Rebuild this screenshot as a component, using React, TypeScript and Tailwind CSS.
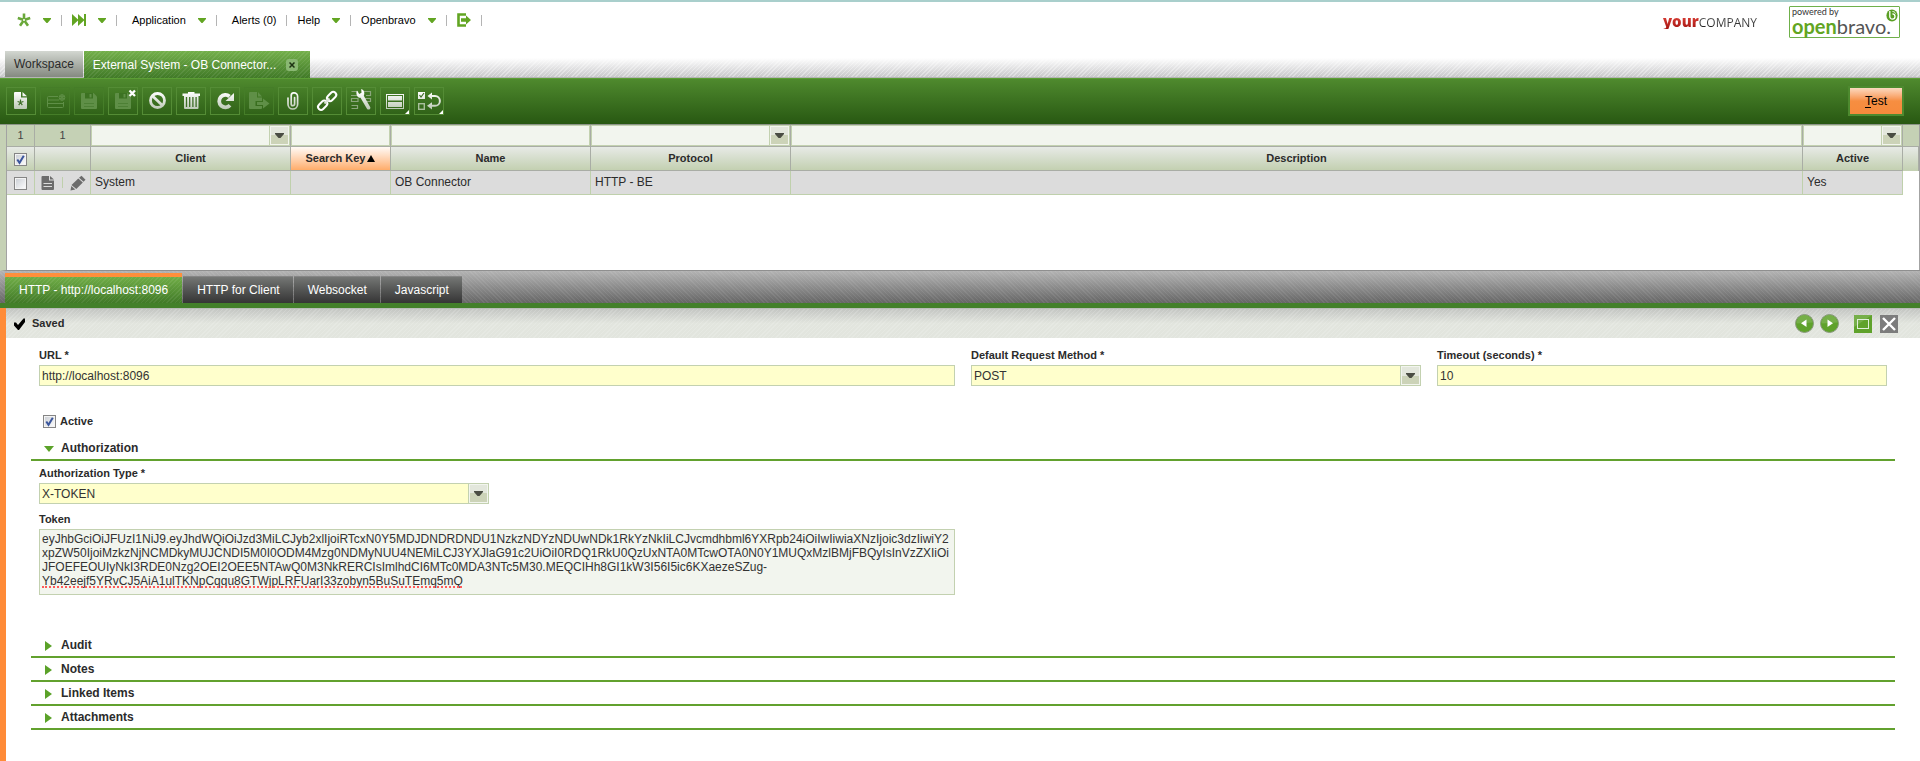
import React, { useState } from 'react';

const TOKEN =
  'eyJhbGciOiJFUzI1NiJ9.eyJhdWQiOiJzd3MiLCJyb2xlIjoiRTcxN0Y5MDJDNDRDNDU1NzkzNDYzNDUwNDk1RkYzNkIiLCJvcmdhbml6YXRpb24iOiIwIiwiaXNzIjoic3dzIiwiY2' +
  'xpZW50IjoiMzkzNjNCMDkyMUJCNDI5M0I0ODM4Mzg0NDMyNUU4NEMiLCJ3YXJlaG91c2UiOiI0RDQ1RkU0QzUxNTA0MTcwOTA0N0Y1MUQxMzlBMjFBQyIsInVzZXIiOi' +
  'JFOEFEOUIyNkI3RDE0Nzg2OEI2OEE5NTAwQ0M3NkRERCIsImlhdCI6MTc0MDA3NTc5M30.MEQCIHh8GI1kW3I56I5ic6KXaezeSZug-' +
  'Yb42eejf5YRvCJ5AiA1ulTKNpCqqu8GTWjpLRFUarI33zobyn5BuSuTEmq5mQ';

/* ---------- Top menu ---------- */

function Caret() {
  return (
    <svg width="8" height="5" viewBox="0 0 8 5" aria-hidden="true">
      <path d="M0 0h8v1L4.500 5h-1L0 1z" fill="#62a522" />
    </svg>
  );
}

function StarIcon() {
  return (
    <svg width="14" height="14" viewBox="0 0 14 14" aria-hidden="true">
      <g stroke="#6aa83a" strokeWidth="2.600">
        <path d="M7 7V.5M7 7L.8 5M7 7l6.200-2M7 7l-4 5.800M7 7l4 5.800" />
      </g>
      <circle cx="7" cy="7" r="1" fill="#fff" />
    </svg>
  );
}

function ForwardIcon() {
  return (
    <svg width="14" height="14" viewBox="0 0 14 14" aria-hidden="true">
      <path d="M0 1l6 5.500V1l6 5.500V1h2v12h-2V7.500L6 13V7.500L0 13z" fill="#62a522" />
    </svg>
  );
}

function ExitIcon() {
  return (
    <svg width="14" height="14" viewBox="0 0 14 14" aria-hidden="true">
      <path d="M9 1.500H1.500v11H9" fill="none" stroke="#62a522" strokeWidth="2.600" />
      <path d="M4 5.300h5V2.500L14 7l-5 4.500V8.700H4z" fill="#62a522" />
    </svg>
  );
}

function MenuItem({
  label,
  caret,
  wide,
  children,
}: {
  label: string;
  caret?: boolean;
  wide?: boolean;
  children?: React.ReactNode;
}) {
  return (
    <li className="flex items-center">
      <button
        type="button"
        aria-label={label}
        className={
          wide ? 'flex items-center gap-3 pr-2.5 pl-[15px]' : 'flex items-center gap-3 px-2.5'
        }
      >
        {children ?? <span>{label}</span>}
        {caret && <Caret />}
      </button>
      <span className="h-[11px] w-px bg-[#b4b4b4]" />
    </li>
  );
}

function Logos() {
  return (
    <div className="flex items-center gap-8 pr-5">
      <div className="flex items-baseline leading-4">
        <span className="bg-linear-to-b from-[#e8483f] to-[#a5120f] bg-clip-text font-['Open_Sans'] text-[15px] font-extrabold text-transparent">
          your
        </span>
        <span className="bg-linear-to-b from-[#666] to-[#111] bg-clip-text font-['Open_Sans'] text-xs text-transparent">
          COMPANY
        </span>
      </div>
      <div className="relative flex h-8 w-[111px] flex-col rounded-[1px] border border-[#6fb04a] pl-[2px] font-['Lato']">
        <span className="text-[9px] leading-[9px] text-[#333]">powered by</span>
        <span className="text-[20px] leading-5 text-[#555]">
          <span className="font-bold text-[#62a522]">open</span>bravo.
        </span>
        <svg
          className="absolute top-[2px] right-[1px]"
          width="12"
          height="13"
          viewBox="0 0 12 13"
          aria-hidden="true"
        >
          <ellipse cx="6" cy="6.500" rx="5.600" ry="6" fill="#5a9f24" />
          <path d="M3.800 2v5.500a2.600 2.600 0 1 0 2.600-2.600" stroke="#fff" strokeWidth="1.300" fill="none" />
          <path d="M6.500 2.500c1.500 0 2.500.8 3 2" stroke="#fff" fill="none" />
        </svg>
      </div>
    </div>
  );
}

function Header() {
  return (
    <header className="relative flex flex-col border-t-2 border-[#a9cfcc] bg-white">
      <div className="absolute inset-x-0 bottom-0 h-5 border-b border-[#b5b5b5] bg-[repeating-linear-gradient(135deg,rgba(255,255,255,0.35)_0px,rgba(255,255,255,0.35)_1px,transparent_1px,transparent_3px),linear-gradient(to_bottom,#ffffff,#c8c8ca)]" />
      <div className="flex items-start justify-between">
        <ul className="flex h-9 items-center pl-[7px] text-[11px] text-black">
          <MenuItem label="Create New" caret>
            <StarIcon />
          </MenuItem>
          <MenuItem label="Quick Launch" caret>
            <ForwardIcon />
          </MenuItem>
          <MenuItem label="Application" caret wide />
          <MenuItem label="Alerts (0)" wide />
          <MenuItem label="Help" caret />
          <MenuItem label="Openbravo" caret />
          <MenuItem label="Log Out">
            <ExitIcon />
          </MenuItem>
        </ul>
        <div className="pt-1">
          <Logos />
        </div>
      </div>
      <div className="relative flex gap-px pt-[13px] pl-[5px] text-xs">
        <button
          type="button"
          className="mb-px h-[26px] bg-linear-to-b from-[#d3d7d1] to-[#858a81] px-[9px] text-[#2b2b2b]"
        >
          Workspace
        </button>
        <div className="flex h-[27px] items-center gap-2.5 bg-[repeating-linear-gradient(135deg,rgba(255,255,255,0.08)_0px,rgba(255,255,255,0.08)_1px,transparent_1px,transparent_3px),linear-gradient(to_bottom,#74b04b,#417a28)] pr-3 pl-[9px] text-white">
          <button type="button">External System - OB Connector...</button>
          <button
            type="button"
            aria-label="Close tab"
            className="flex size-3 items-center justify-center rounded-[3px] bg-[#8ab873]"
          >
            <svg width="6" height="6" viewBox="0 0 6 6" aria-hidden="true">
              <path d="M.5.5l5 5M5.500.5l-5 5" stroke="#1e3313" strokeWidth="1.500" />
            </svg>
          </button>
        </div>
      </div>
    </header>
  );
}

/* ---------- Toolbar ---------- */

const W = 'url(#toolbarWhite)';
const DIM = '#5f8f47';

function Floppy() {
  return (
    <g fill={DIM}>
      <path d="M7 5h11.500L22 8.500V20a1 1 0 0 1-1 1H7a1 1 0 0 1-1-1V6a1 1 0 0 1 1-1z" />
      <path d="M10 5h8v5.500h-8z" fill="#3c7222" />
      <path d="M14.500 6h2v3.500h-2z" />
      <path d="M9 15h10v1H9zM9 18h10v1H9z" fill="#4d8035" />
    </g>
  );
}

const TOOLS: { label: string; dim?: boolean; more?: boolean; icon: React.ReactNode }[] = [
  {
    label: 'New record in form',
    icon: (
      <>
        <path d="M8 4h6v5.500h6V20a1 1 0 0 1-1 1H8a1 1 0 0 1-1-1V5a1 1 0 0 1 1-1z" fill={W} />
        <path d="M15.500 4L20 8.300h-4.500z" fill={W} />
        <path
          d="M13.500 14.500V11.500M13.500 14.500l-2.900-1M13.500 14.500l2.900-1M13.500 14.500l-1.800 2.600M13.500 14.500l1.800 2.600"
          stroke="#3d6d26"
          strokeWidth="1.200"
        />
      </>
    ),
  },
  {
    label: 'New record in grid',
    dim: true,
    icon: (
      <g stroke={DIM} fill="none">
        <path d="M17 8.500H7.500a1 1 0 0 0-1 1v9a1 1 0 0 0 1 1h14a1 1 0 0 0 1-1V14M6.500 12H18M6.500 15.500h16" />
        <path d="M21 6.500v6M18.200 8l5.600 3M23.800 8l-5.600 3" strokeWidth="1.200" />
        <circle cx="21" cy="9.500" r="2.800" />
      </g>
    ),
  },
  { label: 'Save', dim: true, icon: <Floppy /> },
  {
    label: 'Save and close',
    icon: (
      <>
        <Floppy />
        <path d="M20.500 2.500l5.500 5.500M26 2.500L20.500 8" stroke="#fff" strokeWidth="2.300" />
      </>
    ),
  },
  {
    label: 'Undo',
    icon: (
      <g stroke={W} strokeWidth="2.800" fill="none">
        <circle cx="14.500" cy="12.500" r="7" />
        <path d="M9.500 8l10 9.500" />
      </g>
    ),
  },
  {
    label: 'Delete',
    icon: (
      <>
        <path d="M5.500 5.500H11V4h6.500v1.500H23V8H5.500z" fill={W} />
        <path d="M7 8h14.500v12a1 1 0 0 1-1 1H8a1 1 0 0 1-1-1z" fill={W} />
        <path d="M9.500 9v10M12.700 9v10M15.900 9v10M19.100 9v10" stroke="#3d6d26" strokeWidth="1.300" />
      </>
    ),
  },
  {
    label: 'Refresh',
    icon: (
      <>
        <path d="M19 17.300A6.200 6.200 0 1 1 18.500 8.500" stroke={W} strokeWidth="3.800" fill="none" />
        <path d="M23 5v8h-8.500z" fill={W} />
      </>
    ),
  },
  {
    label: 'Export',
    dim: true,
    icon: (
      <g fill={DIM}>
        <path d="M5 4h7v5.500h5V13h-6.500v5H17v2a1 1 0 0 1-1 1H5a1 1 0 0 1-1-1V5a1 1 0 0 1 1-1z" />
        <path d="M13 4l4 4.500h-4zM12 14h6v-3.500l6.500 5-6.500 5V17h-6z" />
      </g>
    ),
  },
  {
    label: 'Attachments',
    icon: (
      <path
        d="M12.200 9v7a1.700 1.700 0 0 0 3.400 0V9.500M9 10v6.200a4.800 4.800 0 0 0 9.600 0V8.500a3.600 3.600 0 0 0-3.600-3.600h-.4a2.600 2.600 0 0 0-2.400 2.600V10"
        stroke={W}
        strokeWidth="1.700"
        strokeLinecap="round"
        fill="none"
      />
    ),
  },
  {
    label: 'Linked items',
    icon: (
      <g fill="none" stroke={W} strokeWidth="2">
        <rect x="-5.500" y="-3" width="10.500" height="6" rx="3" transform="translate(18.800 8.300) rotate(-45)" />
        <rect x="-5" y="-3" width="10.500" height="6" rx="3" transform="translate(9.500 17.400) rotate(-45)" />
        <path d="M11.500 15.500l5-5" />
      </g>
    ),
  },
  {
    label: 'Process',
    icon: (
      <>
        <path
          d="M4.500 3.500h6v4h-6M17 3.500h6.500v4H19M4.500 10.500H11v3H4.500zM18 10.500h5.500v3H19M4.500 17.500h6v3h-6M4 7.500h7"
          stroke="#8ba67c"
          strokeWidth="1.200"
          fill="none"
        />
        <path
          d="M10 2.500l2.200 3.500 2.300-1.200L14.200 1c3 1 3.800 4 2.600 6.700l6.500 11.500c.6 2-2 3.300-3.200 1.700L13.500 9.800C10.500 10 8.300 6 10 2.500z"
          fill={W}
        />
      </>
    ),
  },
  {
    label: 'Toggle view',
    more: true,
    icon: (
      <>
        <rect x="5.500" y="6.500" width="17" height="14" fill="none" stroke={W} />
        <path d="M7 8h14v4.500H7zM7 14h14v5H7z" fill={W} />
      </>
    ),
  },
  {
    label: 'Tree',
    more: true,
    icon: (
      <>
        <path d="M3 4h7v7H3z" fill={W} />
        <path d="M4.500 7l1.500 2 3-4" stroke="#3d6d26" strokeWidth="1.200" fill="none" />
        <rect x="3.700" y="15.700" width="5.600" height="5.600" fill="none" stroke="#a9bf9c" strokeWidth="1.400" />
        <path d="M15 8h5a4.800 4.800 0 0 1 0 9.800h-5" stroke={W} strokeWidth="2" fill="none" />
        <path d="M12.500 8L17 4.500v7zM12 17.800l5-3.600v7.200z" fill={W} />
      </>
    ),
  },
];

function Toolbar() {
  return (
    <div className="flex items-center justify-between border-t border-[#5c9e35] border-b border-b-[#8c9488] bg-linear-to-b from-[#4f8a2e] to-[#285812] pt-[7px] pr-4 pb-2 pl-1.5">
      <svg width="0" height="0" className="absolute" aria-hidden="true">
        <linearGradient id="toolbarWhite" gradientUnits="userSpaceOnUse" x1="0" y1="4" x2="0" y2="22">
          <stop offset="0" stopColor="#fff" />
          <stop offset="1" stopColor="#b9c6b2" />
        </linearGradient>
      </svg>
      <div className="flex gap-1">
        {TOOLS.map((t) => (
          <button
            key={t.label}
            type="button"
            aria-label={t.label}
            disabled={t.dim}
            className={
              t.dim
                ? 'h-7 w-[30px] border border-[#457d28]'
                : 'h-7 w-[30px] border border-[#548c35]'
            }
          >
            <svg width="28" height="26" viewBox="0 0 28 26" fill="none" aria-hidden="true">
              {t.icon}
              {t.more && <path d="M28 22v4h-4z" fill="#fff" />}
            </svg>
          </button>
        ))}
      </div>
      <button
        type="button"
        className="h-[30px] w-14 border-2 border-[#4d8a2f] bg-linear-to-b from-[#fbd9bf] via-[#f68e41] via-50% to-[#f68a3c] text-xs text-black"
      >
        <span className="underline underline-offset-2">T</span>est
      </button>
    </div>
  );
}

/* ---------- Shared controls ---------- */

function PickerArrow() {
  return (
    <span className="pointer-events-none absolute inset-y-0 right-0 flex w-[21px] items-center justify-center border border-[#c3d1b0] bg-[#f2f5ee] p-px">
      <span className="flex size-full items-center justify-center bg-linear-to-b from-[#e3e7dc] from-50% to-[#ccd3b8] to-50%">
        <svg width="9" height="5" viewBox="0 0 9 5" aria-hidden="true">
          <path d="M0 0h9v1L5.500 5h-2L0 1z" fill="#4a4d43" />
        </svg>
      </span>
    </span>
  );
}

function CheckBox({ id, label, initial }: { id: string; label: string; initial: boolean }) {
  const [on, setOn] = useState(initial);
  return (
    <span className="relative inline-flex size-[13px] align-middle">
      <input
        id={id}
        type="checkbox"
        aria-label={label}
        checked={on}
        onChange={(e) => setOn(e.target.checked)}
        className="size-[13px] appearance-none border border-[#858585] bg-linear-to-br from-[#c9cdd3] to-white shadow-[inset_0_0_0_1px_#f4f4f4]"
      />
      {on && (
        <svg
          className="pointer-events-none absolute inset-0"
          width="13"
          height="13"
          viewBox="0 0 13 13"
          aria-hidden="true"
        >
          <path d="M3.300 6.500L5.500 9.800 9.800 2.800" stroke="#3b569c" strokeWidth="2" fill="none" />
        </svg>
      )}
    </span>
  );
}

/* ---------- Grid ---------- */

function FilterCell({ label, picker }: { label: string; picker?: boolean }) {
  const box = 'block h-[21px] w-full border border-[#c3d1b0] bg-[#f2f5ee] px-1 text-xs';
  return (
    <td className="border-r border-b border-[#a9ada5] bg-[#f2f5ee] p-0">
      {picker ? (
        <span className="relative block">
          <select aria-label={label} className={`${box} appearance-none`} defaultValue="">
            <option value=""></option>
          </select>
          <PickerArrow />
        </span>
      ) : (
        <input aria-label={label} className={box} />
      )}
    </td>
  );
}

function RecordGrid() {
  const head =
    'border-r border-b border-[#a9ada5] bg-linear-to-b from-[#e7eae6] to-[#c3d0b1] p-0 text-center font-bold';
  const cell = 'truncate border-r border-b border-[#bfd0ac] bg-[#dcdcdc] px-1 pt-0 pb-px';
  const count = 'border-r border-b border-[#a9ada5] bg-[#c5d1b5] p-0 text-center text-[11px] text-[#444]';
  return (
    <section className="min-h-[146px] border-b border-l-6 border-[#8f8f8f] border-l-[#c5d1b5] bg-white">
      <div className="min-h-[145px] border-x border-[#a3a3a3]">
        <table className="w-full table-fixed border-separate border-spacing-0 text-xs text-[#2b2b2b]">
          <colgroup>
            <col className="w-7" />
            <col className="w-14" />
            <col className="w-[200px]" />
            <col className="w-[100px]" />
            <col className="w-[200px]" />
            <col className="w-[200px]" />
            <col />
            <col className="w-[100px]" />
            <col className="w-4" />
          </colgroup>
          <thead>
            <tr className="h-[22px]">
              <td className={count}>1</td>
              <td className={count}>1</td>
              <FilterCell label="Filter Client" picker />
              <FilterCell label="Filter Search Key" />
              <FilterCell label="Filter Name" />
              <FilterCell label="Filter Protocol" picker />
              <FilterCell label="Filter Description" />
              <FilterCell label="Filter Active" picker />
              <td className="border-b border-[#a9ada5] bg-[#c5d1b5] p-0" />
            </tr>
            <tr className="h-6 text-[11px]">
              <th className={head}>
                <CheckBox id="select-all" label="Select all" initial />
              </th>
              <th className={head} />
              <th className={head}>Client</th>
              <th className="border-r border-b border-[#a9ada5] bg-linear-to-b from-[#fffaf6] to-[#ffac69] p-0 text-center font-bold">
                <span className="flex items-center justify-center gap-0.5">
                  Search Key
                  <svg width="8" height="7" viewBox="0 0 8 7" aria-hidden="true">
                    <path d="M4 0l4 7H0z" fill="#000" />
                  </svg>
                </span>
              </th>
              <th className={head}>Name</th>
              <th className={head}>Protocol</th>
              <th className={head}>Description</th>
              <th className={head}>Active</th>
              <th className="border-r border-[#a9ada5] bg-linear-to-b from-[#e7eae6] to-[#c3d0b1] p-0" />
            </tr>
          </thead>
          <tbody>
            <tr className="h-6">
              <td className="border-r border-b border-[#bfd0ac] bg-[#dcdcdc] p-0 text-center">
                <CheckBox id="select-row" label="Select row" initial={false} />
              </td>
              <td className="border-r border-b border-[#bfd0ac] bg-[#dcdcdc] p-0">
                <span className="flex items-center justify-between pr-1 pl-1.5">
                  <button type="button" aria-label="Edit in form">
                    <svg width="14" height="16" viewBox="0 0 14 16" aria-hidden="true">
                      <path d="M1.500 1H8v4.500h5V14a1 1 0 0 1-1 1H1.500a1 1 0 0 1-1-1V2a1 1 0 0 1 1-1zM9 1l4 3.500H9z" fill="#6c6c6c" />
                      <path d="M2.500 8.500h8.500M2.500 11.500h8.500" stroke="#dcdcdc" strokeWidth="1.200" />
                    </svg>
                  </button>
                  <span className="h-[11px] w-px bg-[#bfd0ac]" />
                  <button type="button" aria-label="Edit in grid">
                    <svg width="16" height="16" viewBox="0 0 16 16" aria-hidden="true">
                      <path d="M11.500.7l4 4-2 2-4.500-4z" fill="#6c6c6c" />
                      <path d="M8.300 3.500l4.500 4-6.500 6.500-4.800-4z" fill="#6c6c6c" />
                      <path d="M1.300 11l4 3.500-4.800 1z" fill="#6c6c6c" />
                    </svg>
                  </button>
                </span>
              </td>
              <td className={cell}>System</td>
              <td className={cell} />
              <td className={cell}>OB Connector</td>
              <td className={cell}>HTTP - BE</td>
              <td className={cell} />
              <td className={cell}>Yes</td>
              <td />
            </tr>
          </tbody>
        </table>
      </div>
    </section>
  );
}

/* ---------- Child tabs ---------- */

function ChildTabs() {
  return (
    <nav className="flex items-end border-b-[5px] border-[#43802a] bg-[repeating-linear-gradient(45deg,rgba(255,255,255,0.07)_0px,rgba(255,255,255,0.07)_1px,transparent_1px,transparent_3px),linear-gradient(to_bottom,#b3b3b3,#666666)] pl-[5px] text-xs text-white">
      <button
        type="button"
        className="mt-0.5 mr-px h-[30px] border-t-4 border-[#ff8f3b] bg-[repeating-linear-gradient(135deg,rgba(255,255,255,0.07)_0px,rgba(255,255,255,0.07)_1px,transparent_1px,transparent_3px),linear-gradient(to_bottom,#70ad47,#417a28)] px-3.5"
      >
        HTTP - http://localhost:8096
      </button>
      {['HTTP for Client', 'Websocket', 'Javascript'].map((t) => (
        <button
          key={t}
          type="button"
          className="mr-px h-[27px] border-t border-[#858585] bg-linear-to-b from-[#757775] to-[#353535] pr-[13px] pl-3.5"
        >
          {t}
        </button>
      ))}
    </nav>
  );
}

/* ---------- Form ---------- */

function StatusBar() {
  return (
    <div className="flex h-[30px] items-center justify-between border-t border-[#b9bcb9] bg-[repeating-linear-gradient(135deg,rgba(255,255,255,0.15)_0px,rgba(255,255,255,0.15)_1px,transparent_1px,transparent_3px),linear-gradient(to_bottom,#c4c6c3,#e2e5de_50%)] pr-[22px] pl-2">
      <div className="flex items-center gap-[7px] text-[11px] font-bold text-[#2b2b2b]">
        <svg width="11" height="12" viewBox="0 0 11 12" aria-hidden="true">
          <path d="M0 4.500h2l2 2.500L9.500.5H11v3.500L5 12H4L0 7.500z" fill="#000" />
        </svg>
        <span>Saved</span>
      </div>
      <div className="flex items-center">
        <button type="button" aria-label="Previous record" className="mr-1.5">
          <svg width="19" height="19" viewBox="0 0 19 19" aria-hidden="true">
            <circle cx="9.500" cy="9.500" r="9" fill="#5fa22b" stroke="#8b9a80" />
            <path d="M1.500 9.500a8 8 0 0 1 16-1z" fill="#fff" opacity=".14" />
            <path d="M11.500 5.500v7.500L6 9.200z" fill="#fff" />
          </svg>
        </button>
        <button type="button" aria-label="Next record" className="mr-[15px]">
          <svg width="19" height="19" viewBox="0 0 19 19" aria-hidden="true">
            <circle cx="9.500" cy="9.500" r="9" fill="#5fa22b" stroke="#8b9a80" />
            <path d="M1.500 9.500a8 8 0 0 1 16-1z" fill="#fff" opacity=".14" />
            <path d="M7.500 5.500v7.500L13 9.200z" fill="#fff" />
          </svg>
        </button>
        <button type="button" aria-label="Maximize" className="mr-2">
          <svg width="18" height="18" viewBox="0 0 18 18" aria-hidden="true">
            <path d="M0 0h18v18H0z" fill="#5fa22b" />
            <path d="M0 0h18L0 12z" fill="#fff" opacity=".15" />
            <rect x="3.500" y="4.500" width="11" height="9" fill="none" stroke="#dfeeda" />
          </svg>
        </button>
        <button type="button" aria-label="Close form">
          <svg width="18" height="18" viewBox="0 0 18 18" aria-hidden="true">
            <path d="M0 0h18v18H0z" fill="#7c7c7c" />
            <path d="M3 3l12 12M15 3L3 15" stroke="#fff" strokeWidth="2.400" />
          </svg>
        </button>
      </div>
    </div>
  );
}

const FIELD = 'block h-[21px] w-full border border-[#c3d1b0] bg-[#ffffcc] px-0.5 text-xs text-[#333]';
const LABEL = 'mb-0.5 block text-[11px] leading-4 font-bold text-[#2b2b2b]';

function TextField({ id, label, value }: { id: string; label: string; value: string }) {
  return (
    <>
      <label htmlFor={id} className={LABEL}>
        {label}
      </label>
      <input id={id} defaultValue={value} className={FIELD} />
    </>
  );
}

function SelectField({ id, label, value }: { id: string; label: string; value: string }) {
  return (
    <>
      <label htmlFor={id} className={LABEL}>
        {label}
      </label>
      <span className="relative block">
        <select id={id} className={`${FIELD} appearance-none`} defaultValue={value}>
          <option>{value}</option>
        </select>
        <PickerArrow />
      </span>
    </>
  );
}

function SectionHeader({ title, open }: { title: string; open?: boolean }) {
  return (
    <h2 className="mx-[25px] border-b-2 border-[#62a12e]">
      <button
        type="button"
        aria-expanded={!!open}
        className="flex h-[22px] items-center gap-1.5 pl-3 text-xs font-bold text-[#2b2b2b]"
      >
        <svg width="12" height="12" viewBox="0 0 12 12" aria-hidden="true">
          {open ? <path d="M1 4h10L6 10z" fill="#5ba229" /> : <path d="M2 2v10l7-5z" fill="#5ba229" />}
        </svg>
        {title}
      </button>
    </h2>
  );
}

function RecordForm() {
  return (
    <section className="grow border-l-6 border-[#ff8b38] bg-white">
      <StatusBar />
      <div className="grid grid-cols-4 gap-x-4 px-[33px] pt-[9px]">
        <div className="col-span-2">
          <TextField id="url" label="URL *" value="http://localhost:8096" />
        </div>
        <div>
          <SelectField id="method" label="Default Request Method *" value="POST" />
        </div>
        <div>
          <TextField id="timeout" label="Timeout (seconds) *" value="10" />
        </div>
      </div>
      <div className="flex items-center gap-1 px-[37px] pt-[27px] pb-2">
        <CheckBox id="active" label="Active" initial />
        <label htmlFor="active" className="text-[11px] leading-4 font-bold text-[#2b2b2b]">
          Active
        </label>
      </div>
      <SectionHeader title="Authorization" open />
      <div className="grid grid-cols-4 gap-x-4 gap-y-[7px] px-[33px] pt-1 pb-[39px]">
        <div>
          <SelectField id="auth-type" label="Authorization Type *" value="X-TOKEN" />
        </div>
        <div className="col-span-2 col-start-1">
          <label htmlFor="token" className={LABEL}>
            Token
          </label>
          <div className="relative">
            <textarea
              id="token"
              spellCheck={false}
              defaultValue={TOKEN}
              className="block h-[66px] w-full resize-none overflow-hidden border border-[#c3d1b0] bg-[#f2f5ee] px-0.5 py-0.5 text-xs leading-3.5 [overflow-wrap:anywhere] text-[#333]"
            />
            <span className="pointer-events-none absolute top-[57px] left-[3px] w-[420px] border-b-2 border-dotted border-[#ff5a5a]" />
          </div>
        </div>
      </div>
      <SectionHeader title="Audit" />
      <SectionHeader title="Notes" />
      <SectionHeader title="Linked Items" />
      <SectionHeader title="Attachments" />
    </section>
  );
}

export default function App() {
  return (
    <div className="flex min-h-screen flex-col bg-white font-['Liberation_Sans',Arial,sans-serif]">
      <Header />
      <Toolbar />
      <RecordGrid />
      <ChildTabs />
      <RecordForm />
    </div>
  );
}
